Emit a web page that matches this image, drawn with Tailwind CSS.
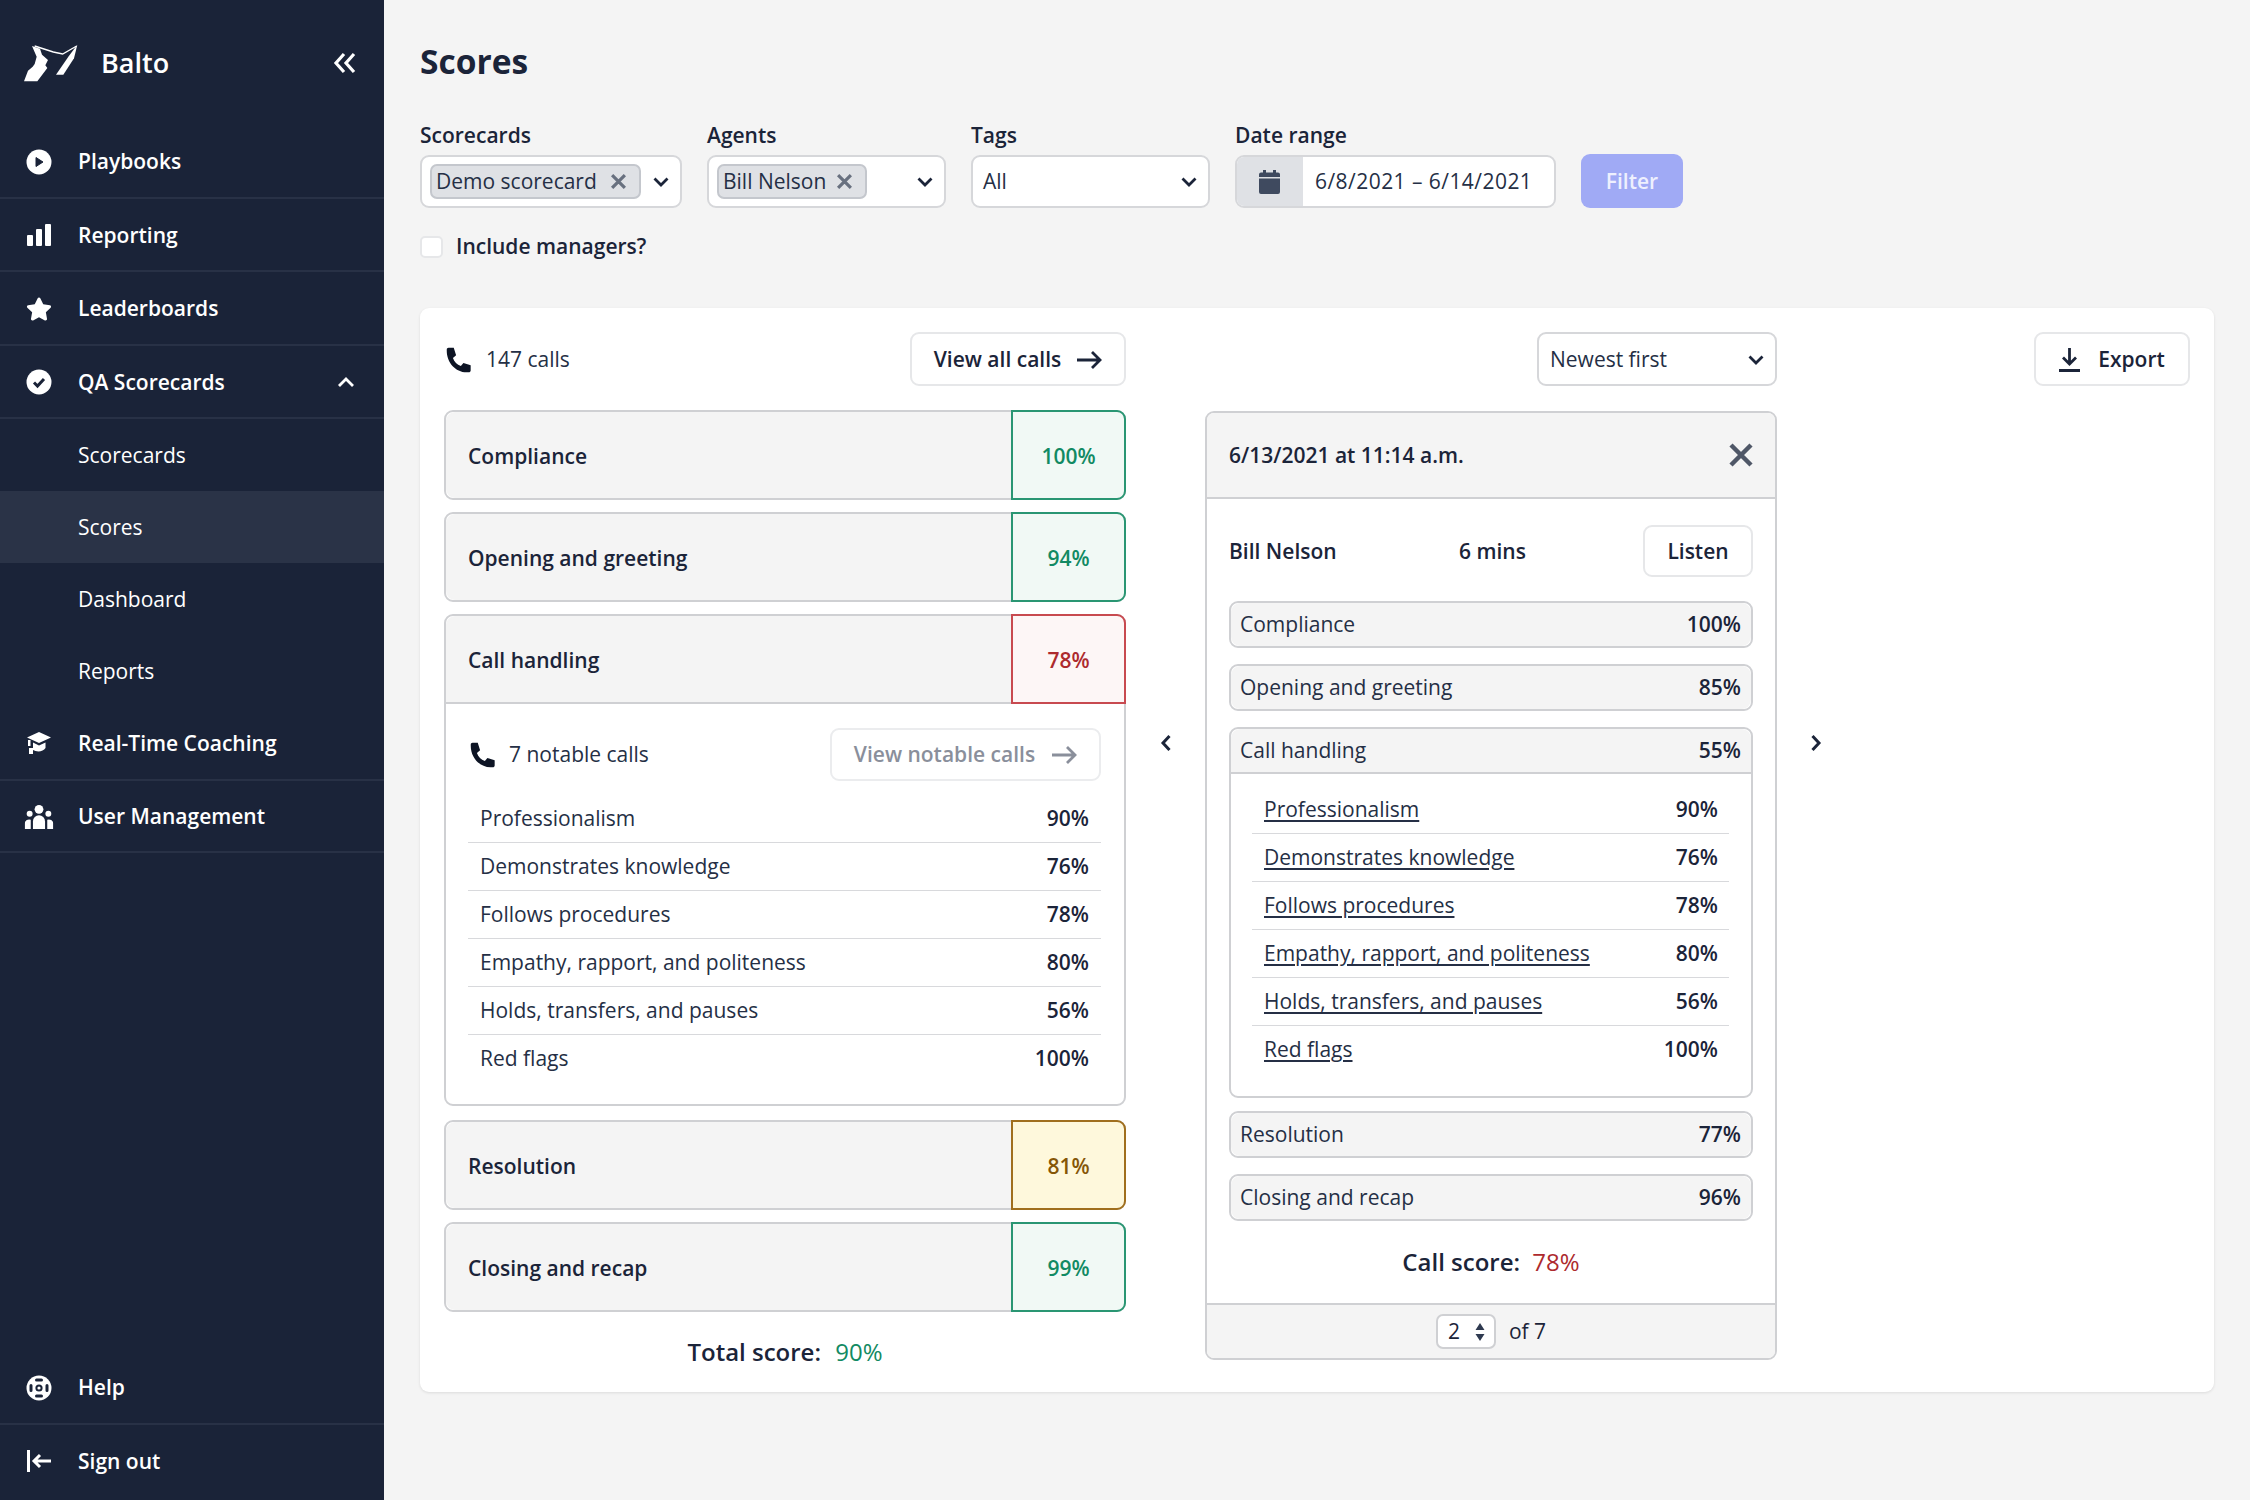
<!DOCTYPE html>
<html lang="en">
  <head>
    <meta charset="UTF-8" />
    <title>Balto - Scores</title>
    <script src="https://cdn.jsdelivr.net/npm/@tailwindcss/browser@4"></script>
  </head>
  <body class="bg-[#f4f4f4] font-['Open_Sans',sans-serif] text-[21px] text-[#1b2439]">
    <div class="flex h-[1500px] w-[2250px] overflow-hidden">
      <!-- sidebar -->
      <aside class="flex w-[384px] shrink-0 flex-col justify-between bg-[#1a2338] text-white">
        <div>
          <div class="flex h-[125px] items-center pr-[27px] pl-[20px]">
            <svg class="h-[46px] w-[64px]" viewBox="0 0 192 138" fill="#fff">
              <polygon points="36,18 60,26 66,44 84,60 76,76 82,84 52,124 12,124 24,92 38,80 44,72 50,50" />
              <polyline points="44,18 100,36 128,42 170,18" fill="none" stroke="#fff" stroke-width="4" />
              <polygon points="172,14 162,55 130,104 108,104 145,50" />
            </svg>
            <span class="ml-[17px] pt-[2px] text-[27px] font-semibold">Balto</span>
            <svg class="ml-auto h-[24px] w-[24px]" viewBox="0 0 24 24" fill="none" stroke="#fff" stroke-width="3.200">
              <path d="M11 3 3 12l8 9M21 3l-8 9 8 9" />
            </svg>
          </div>
          <nav>
            <a class="flex h-[73.5px] items-center gap-[26px] border-b-2 border-[#283146] pt-[2px] pl-[26px] font-semibold">
              <svg class="h-[26px] w-[26px]" viewBox="0 0 26 26"><circle cx="13" cy="13" r="12.5" fill="#fff" /><path d="M10 8.5v9l7-4.500z" fill="#1a2338" stroke="#1a2338" stroke-linejoin="round" /></svg>
              Playbooks
            </a>
            <a class="flex h-[73.5px] items-center gap-[26px] border-b-2 border-[#283146] pt-[2px] pl-[26px] font-semibold">
              <svg class="h-[26px] w-[26px]" viewBox="0 0 26 26" fill="#fff"><rect x="1" y="13" width="6" height="11" rx="1" /><rect x="10" y="7" width="6" height="17" rx="1" /><rect x="19" y="2" width="6" height="22" rx="1" /></svg>
              Reporting
            </a>
            <a class="flex h-[73.5px] items-center gap-[26px] border-b-2 border-[#283146] pt-[2px] pl-[26px] font-semibold">
              <svg class="h-[26px] w-[26px]" viewBox="0 0 576 512" fill="#fff"><path d="M259.3 17.8L194 150.2 47.9 171.5c-26.2 3.8-36.7 36.1-17.7 54.6l105.7 103-25 145.5c-4.5 26.3 23.2 46 46.4 33.7L288 439.6l130.7 68.7c23.2 12.2 50.9-7.4 46.4-33.7l-25-145.5 105.7-103c19-18.5 8.5-50.8-17.7-54.6L382 150.2 316.7 17.8c-11.7-23.6-45.6-23.9-57.4 0z" /></svg>
              Leaderboards
            </a>
            <a class="flex h-[73.5px] items-center gap-[26px] border-b-2 border-[#283146] pt-[2px] pr-[29px] pl-[26px] font-semibold">
              <svg class="h-[26px] w-[26px]" viewBox="0 0 26 26"><circle cx="13" cy="13" r="12.5" fill="#fff" /><path d="M8 13.5l3.5 3.5 6.5-7" fill="none" stroke="#1a2338" stroke-width="3" /></svg>
              QA Scorecards
              <svg class="ml-auto h-[16px] w-[18px]" viewBox="0 0 18 16" fill="none" stroke="#fff" stroke-width="2.8"><path d="M2 12l7-7 7 7" /></svg>
            </a>
            <a class="flex h-[72px] items-center pt-[2px] pl-[78px] font-medium">Scorecards</a>
            <a class="flex h-[72px] items-center bg-[#2a3347] pt-[2px] pl-[78px] font-medium">Scores</a>
            <a class="flex h-[72px] items-center pt-[2px] pl-[78px] font-medium">Dashboard</a>
            <a class="flex h-[72px] items-center pt-[2px] pl-[78px] font-medium">Reports</a>
            <a class="flex h-[74px] items-center gap-[26px] border-b-2 border-[#283146] pt-[2px] pl-[26px] font-semibold">
              <svg class="h-[26px] w-[26px]" viewBox="0 0 26 26" fill="#fff">
                <path d="M13 1 25 6.5 13 12 1 6.5z" />
                <path d="M7 11.5l6 3 6.5-3V17c-2 3-6 4-10 3l-2.500-1z" />
                <rect x="2" y="9" width="2.500" height="6" />
                <rect x="3" y="17" width="4" height="6" />
              </svg>
              Real-Time Coaching
            </a>
            <a class="flex h-[72px] items-center gap-[26px] border-b-2 border-[#283146] pt-[2px] pl-[26px] font-semibold">
              <svg class="h-[26px] w-[26px] scale-110" viewBox="0 0 26 26" fill="#fff">
                <circle cx="13" cy="6" r="4" /><circle cx="4.500" cy="10" r="2.700" /><circle cx="21.500" cy="10" r="2.700" />
                <path d="M7.500 24v-7a5.500 5.500 0 0 1 11 0v7z" /><path d="M0 24v-5a4 4 0 0 1 5.500-3.500V24zM26 24v-5a4 4 0 0 0-5.500-3.500V24z" />
              </svg>
              User Management
            </a>
          </nav>
        </div>
        <div class="pb-[2px]">
          <a class="flex h-[73.5px] items-center gap-[26px] border-b-2 border-[#283146] pt-[2px] pl-[26px] font-semibold">
            <svg class="h-[26px] w-[26px]" viewBox="0 0 26 26"><circle cx="13" cy="13" r="12.500" fill="#fff" /><circle cx="13" cy="13" r="2.600" fill="none" stroke="#1a2338" stroke-width="2" /><path d="M10.500 5h5M10.500 21h5M5 10.500v5M21 10.500v5" stroke="#1a2338" stroke-width="3" stroke-linecap="round" /></svg>
            Help
          </a>
          <a class="flex h-[73.5px] items-center gap-[26px] pl-[26px] font-semibold">
            <svg class="h-[26px] w-[26px]" viewBox="0 0 26 26" fill="none" stroke="#fff" stroke-width="3"><path d="M2.500 2v22M25 13H8M14 7l-6 6 6 6" /></svg>
            Sign out
          </a>
        </div>
      </aside>

      <!-- main -->
      <main class="flex-1 px-[36px] pt-[36px]">
        <h1 class="mb-[34px] pt-[1px] text-[33.5px] leading-[49px] font-bold">Scores</h1>

        <div class="flex items-end gap-[25px]">
          <div class="w-[262px]">
            <label class="mb-[5px] block leading-[30px] font-semibold">Scorecards</label>
            <div class="flex h-[53px] items-center rounded-[9px] border-2 border-[#d6d7da] bg-white pr-[11px] pl-[8px]">
              <span class="flex h-[35px] w-[211px] items-center justify-between rounded-[7px] border-2 border-[#c4c7cd] bg-[#dfe1e5] pr-[12px] pl-[4px] text-[#252f45]">
                Demo scorecard
                <svg class="h-[17px] w-[17px]" viewBox="0 0 16 16" stroke="#68707f" stroke-width="3"><path d="M2 2l12 12M14 2 2 14" /></svg>
              </span>
              <svg class="ml-auto h-[12px] w-[16px]" viewBox="0 0 16 12" fill="none" stroke="#1b2439" stroke-width="2.800"><path d="M1.500 2.500 8 9l6.500-6.500" /></svg>
            </div>
          </div>
          <div class="w-[239px]">
            <label class="mb-[5px] block leading-[30px] font-semibold">Agents</label>
            <div class="flex h-[53px] items-center rounded-[9px] border-2 border-[#d6d7da] bg-white pr-[11px] pl-[8px]">
              <span class="flex h-[35px] w-[150px] items-center justify-between rounded-[7px] border-2 border-[#c4c7cd] bg-[#dfe1e5] pr-[12px] pl-[4px] text-[#252f45]">
                Bill Nelson
                <svg class="h-[17px] w-[17px]" viewBox="0 0 16 16" stroke="#68707f" stroke-width="3"><path d="M2 2l12 12M14 2 2 14" /></svg>
              </span>
              <svg class="ml-auto h-[12px] w-[16px]" viewBox="0 0 16 12" fill="none" stroke="#1b2439" stroke-width="2.800"><path d="M1.500 2.500 8 9l6.500-6.500" /></svg>
            </div>
          </div>
          <div class="w-[239px]">
            <label class="mb-[5px] block leading-[30px] font-semibold">Tags</label>
            <div class="flex h-[53px] items-center justify-between rounded-[9px] border-2 border-[#d6d7da] bg-white pr-[11px] pl-[10px] text-[#252f45]">
              All
              <svg class="h-[12px] w-[16px]" viewBox="0 0 16 12" fill="none" stroke="#1b2439" stroke-width="2.800"><path d="M1.500 2.500 8 9l6.500-6.500" /></svg>
            </div>
          </div>
          <div class="w-[321px]">
            <label class="mb-[5px] block leading-[30px] font-semibold">Date range</label>
            <div class="flex h-[53px] items-center overflow-hidden rounded-[9px] border-2 border-[#d6d7da] bg-white tracking-[0.45px] text-[#252f45]">
              <span class="mr-[12px] flex h-full w-[66px] items-center justify-center bg-[#dfe1e5]">
                <svg class="-ml-[2px] h-[24px] w-[21px]" viewBox="0 0 21 24" fill="#3f4a5f"><rect x="4" width="3" height="4" /><rect x="14" width="3" height="4" /><path d="M0 4.500a2 2 0 0 1 2-2h17a2 2 0 0 1 2 2V7H0zM0 8.500h21V22a2 2 0 0 1-2 2H2a2 2 0 0 1-2-2z" /></svg>
              </span>
              6/8/2021 – 6/14/2021
            </div>
          </div>
          <button class="h-[54px] w-[102px] rounded-[9px] bg-[#a0aaf5] pt-[1px] font-semibold text-[#eef0fe]">Filter</button>
        </div>

        <div class="mt-[28px] flex h-[22px] items-center">
          <span class="h-[22px] w-[23px] rounded-[5px] border-2 border-[#e6e7e9] bg-white"></span>
          <span class="ml-[13px] font-semibold">Include managers?</span>
        </div>

        <section class="mt-[50px] flex h-[1084px] rounded-[9px] bg-white p-[24px] shadow-[0_1px_3px_rgba(0,0,0,0.1)]">
          <!-- category scores -->
          <div class="w-[682px] shrink-0">
            <div class="mb-[24px] flex h-[54px] items-center justify-between">
              <span class="flex items-center pt-[2px] text-[#252f45]">
                <svg class="mr-[13px] ml-[1px] h-[28px] w-[28px]" viewBox="0 0 24 24" fill="#0d1424"><path d="M3 1.500h4.500l2 6.500-2.700 2.200c1.200 3.300 3.500 5.800 6.800 7l2.200-2.700 6.200 2V21c0 1-.8 1.500-1.500 1.500h-2C9 22.500 1.500 14 1.500 4V3c0-.8.700-1.500 1.500-1.500z" /></svg>
                147 calls
              </span>
              <button class="flex h-[54px] w-[216px] items-center justify-center gap-[16px] rounded-[9px] border-2 border-[#e6e7e9] pt-[2px] font-semibold">
                View all calls
                <svg class="h-[20px] w-[25px]" viewBox="0 0 25 20" fill="none" stroke="#1b2439" stroke-width="2.800"><path d="M0 10h23M15 2l8 8-8 8" /></svg>
              </button>
            </div>
            <div class="flex flex-col gap-[12px]" id="categories"></div>
            <p class="mt-[23px] text-center text-[24px] leading-[34px] font-semibold">Total score: <span class="ml-[8px] font-medium text-[#128a63]">90%</span></p>
          </div>

          <div class="flex w-[79px] shrink-0 justify-center pt-[401px]">
            <svg class="h-[20px] w-[12px]" viewBox="0 0 12 20" fill="none" stroke="#1b2439" stroke-width="3"><path d="M9.500 3 3 10l6.500 7" /></svg>
          </div>

          <!-- single call -->
          <div class="w-[572px] shrink-0">
            <div class="mb-[25px] ml-auto flex h-[54px] w-[240px] items-center justify-between rounded-[9px] border-2 border-[#d6d7da] pt-[2px] pr-[11px] pl-[11px] text-[#252f45]">
              Newest first
              <svg class="h-[12px] w-[16px]" viewBox="0 0 16 12" fill="none" stroke="#1b2439" stroke-width="2.800"><path d="M1.500 2.500 8 9l6.500-6.500" /></svg>
            </div>
            <div class="overflow-hidden rounded-[9px] border-2 border-[#cfd0d3]">
              <div class="flex h-[86px] items-center justify-between border-b-2 border-[#cfd0d3] bg-[#f4f4f4] px-[22px] font-semibold">
                <span class="pt-[2px]">6/13/2021 at 11:14 a.m.</span>
                <svg class="h-[24px] w-[24px]" viewBox="0 0 24 24" stroke="#4f5767" stroke-width="4.500"><path d="M2 2l20 20M22 2 2 22" /></svg>
              </div>
              <div class="px-[22px] pt-[26px]">
                <div class="mb-[24px] flex h-[52px] items-center font-semibold">
                  <span class="w-[230px] pt-[1px]">Bill Nelson</span>
                  <span class="pt-[1px]">6 mins</span>
                  <button class="ml-auto h-[52px] w-[110px] rounded-[9px] border-2 border-[#e6e7e9] pt-[1px] font-semibold">Listen</button>
                </div>
                <div id="call-rows"></div>
                <p class="mt-[24px] text-center text-[24px] leading-[34px] font-semibold">Call score: <span class="ml-[6px] font-medium text-[#ad2a2e]">78%</span></p>
              </div>
              <div class="mt-[24px] flex h-[55px] items-center justify-center gap-[13px] border-t-2 border-[#cfd0d3] bg-[#f4f4f4]">
                <span class="flex h-[35px] w-[60px] items-center justify-between rounded-[7px] border-2 border-[#cfd0d3] bg-white pr-[9px] pl-[10px]">
                  2
                  <svg class="h-[20px] w-[10px]" viewBox="0 0 10 20" fill="#2f3a50"><path d="M5 1l4.500 7h-9zM5 19l4.500-7h-9z" /></svg>
                </span>
                of 7
              </div>
            </div>
          </div>

          <div class="flex w-[78px] shrink-0 justify-center pt-[401px]">
            <svg class="h-[20px] w-[12px]" viewBox="0 0 12 20" fill="none" stroke="#1b2439" stroke-width="3"><path d="M2.500 3 9 10l-6.500 7" /></svg>
          </div>

          <button class="ml-auto flex h-[54px] w-[156px] items-center justify-center gap-[18px] rounded-[9px] border-2 border-[#e6e7e9] pt-[2px] font-semibold">
            <svg class="h-[24px] w-[21px]" viewBox="0 0 21 24" fill="none" stroke="#1b2439" stroke-width="2.800"><path d="M10.500 0v15M4 9.500l6.500 6.500L17 9.500M0 22.500h21" /></svg>
            Export
          </button>
        </section>
      </main>
    </div>

    <script>
      const TONES = {
        green: "border-[#2a9673] bg-[#f1f9f5] text-[#128a63]",
        red: "border-[#c84a50] bg-[#fdf6f6] text-[#ad2a2e]",
        amber: "border-[#a06f1e] bg-[#fef8dc] text-[#855606]",
      };

      const categories = [
        { name: "Compliance", score: "100%", callScore: "100%", tone: "green" },
        { name: "Opening and greeting", score: "94%", callScore: "85%", tone: "green" },
        { name: "Call handling", score: "78%", callScore: "55%", tone: "red", open: true },
        { name: "Resolution", score: "81%", callScore: "77%", tone: "amber" },
        { name: "Closing and recap", score: "99%", callScore: "96%", tone: "green" },
      ];

      const details = [
        ["Professionalism", "90%"],
        ["Demonstrates knowledge", "76%"],
        ["Follows procedures", "78%"],
        ["Empathy, rapport, and politeness", "80%"],
        ["Holds, transfers, and pauses", "56%"],
        ["Red flags", "100%"],
      ];

      const notableRows = details
        .map(
          ([name, pct], i) => `
          <div class="flex h-[48px] items-center justify-between px-[12px] ${i < 5 ? "border-b-[1.5px] border-[#d8d9dc]" : ""}">
            <span class="text-[#252f45]">${name}</span><span class="font-semibold">${pct}</span>
          </div>`
        )
        .join("");

      document.getElementById("categories").innerHTML = categories
        .map((c) => {
          const head = `
            <div class="flex h-[86px] items-center justify-between bg-[#f4f4f4] pt-[3px] pl-[22px] font-semibold ${c.open ? "rounded-t-[9px]" : "rounded-[9px]"}">
              ${c.name}
            </div>`;
          const cell = `
            <div class="absolute top-[-2px] right-[-2px] flex h-[90px] w-[115px] items-center justify-center border-2 pt-[3px] font-semibold ${c.open ? "rounded-t-[9px] rounded-tl-none" : "rounded-r-[9px]"} ${TONES[c.tone]}">
              ${c.score}
            </div>`;
          const body = c.open
            ? `<div class="border-t-2 border-[#cfd0d3] pt-[24px] pr-[23px] pb-[21px] pl-[22px]">
                <div class="mb-[14px] flex h-[53px] items-center justify-between">
                  <span class="flex items-center text-[#252f45]">
                    <svg class="mr-[12px] ml-[1px] h-[28px] w-[28px]" viewBox="0 0 24 24" fill="#0d1424"><path d="M3 1.500h4.500l2 6.500-2.700 2.200c1.200 3.300 3.500 5.800 6.800 7l2.200-2.700 6.200 2V21c0 1-.8 1.500-1.500 1.500h-2C9 22.500 1.500 14 1.500 4V3c0-.8.700-1.500 1.500-1.500z" /></svg>
                    7 notable calls
                  </span>
                  <button class="flex h-[53px] w-[271px] items-center justify-center gap-[17px] rounded-[9px] border-2 border-[#ebecee] pt-[1px] font-semibold text-[#8a8f9b]">
                    View notable calls
                    <svg class="h-[20px] w-[25px]" viewBox="0 0 25 20" fill="none" stroke="#8a8f9b" stroke-width="2.800"><path d="M0 10h23M15 2l8 8-8 8" /></svg>
                  </button>
                </div>
                ${notableRows}
              </div>`
            : "";
          const spacing = c.open ? "mb-[2px]" : "";
          return `<div class="relative rounded-[9px] border-2 border-[#cfd0d3] ${spacing}">${head}${cell}${body}</div>`;
        })
        .join("");

      const callDetails = details
        .map(
          ([name, pct], i) => `
          <div class="flex h-[48px] items-center justify-between pr-[11px] pl-[12px] ${i < 5 ? "border-b-[1.5px] border-[#d8d9dc]" : ""}">
            <a class="text-[#252f45] underline underline-offset-[3px]">${name}</a><span class="font-semibold">${pct}</span>
          </div>`
        )
        .join("");

      document.getElementById("call-rows").innerHTML = categories
        .map((c) => {
          const head = `
            <div class="flex items-center justify-between bg-[#f4f4f4] pt-[1px] pr-[10px] pl-[9px] ${c.open ? "h-[45px] rounded-t-[9px] border-b-2 border-[#cfd0d3]" : "h-[43px] rounded-[9px]"}">
              <span class="text-[#252f45]">${c.name}</span><span class="font-semibold">${c.callScore}</span>
            </div>`;
          const body = c.open ? `<div class="pt-[12px] pr-[22px] pb-[22px] pl-[21px]">${callDetails}</div>` : "";
          const spacing = c.open ? "mb-[13px]" : "mb-[16px] last:mb-0";
          return `<div class="rounded-[9px] border-2 border-[#cfd0d3] ${spacing}">${head}${body}</div>`;
        })
        .join("");
    </script>
  </body>
</html>
